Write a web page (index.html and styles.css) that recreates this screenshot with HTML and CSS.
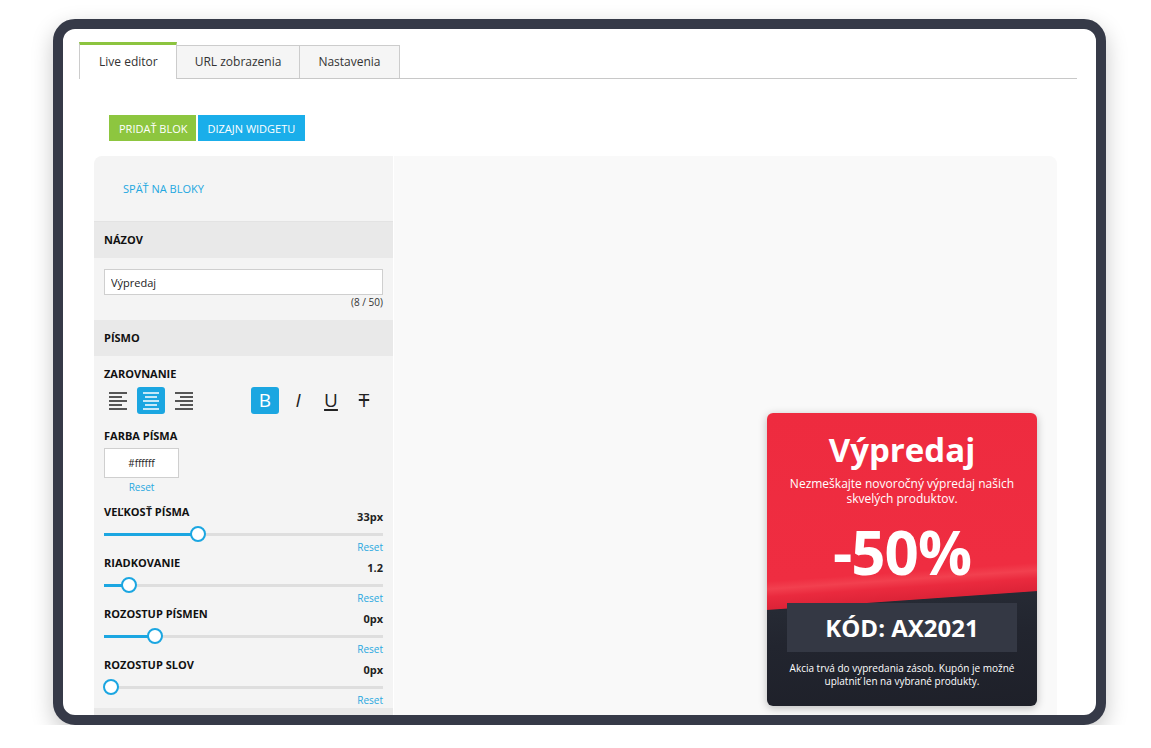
FILE: index.html
```html
<!DOCTYPE html>
<html lang="sk">
<head>
  <meta charset="UTF-8">
  <meta name="viewport" content="width=device-width, initial-scale=1.0">
  <title>Live editor</title>
  <link rel="stylesheet" href="styles.css">
</head>
<body>
  <div class="device">
    <div class="screen">
      <div class="tabs">
        <div class="tab active">Live editor</div>
        <div class="tab">URL zobrazenia</div>
        <div class="tab">Nastavenia</div>
      </div>

      <div class="toolbar">
        <button class="btn btn-green">PRIDAŤ BLOK</button>
        <button class="btn btn-blue">DIZAJN WIDGETU</button>
      </div>

      <div class="editor">
        <div class="sidebar">
          <div class="back"><a href="#">SPÄŤ NA BLOKY</a></div>

          <div class="section-head">NÁZOV</div>
          <div class="section section-name">
            <input class="text-input" type="text" value="Výpredaj">
            <div class="counter">(8 / 50)</div>
          </div>

          <div class="section-head">PÍSMO</div>
          <div class="section section-font">
            <div class="label">ZAROVNANIE</div>
            <div class="format-row">
              <div class="icon-group">
                <div class="icon-btn">
                  <svg width="18" height="18" viewBox="0 0 18 18"><g stroke="#222" stroke-width="1.6"><path d="M0 1h18M0 5h13M0 9h18M0 13h13M0 17h18"/></g></svg>
                </div>
                <div class="icon-btn selected">
                  <svg width="18" height="18" viewBox="0 0 18 18"><g stroke="#fff" stroke-width="1.6"><path d="M1 1h16M3 5h12M1 9h16M3 13h12M1 17h16"/></g></svg>
                </div>
                <div class="icon-btn">
                  <svg width="18" height="18" viewBox="0 0 18 18"><g stroke="#222" stroke-width="1.6"><path d="M0 1h18M5 5h13M0 9h18M5 13h13M0 17h18"/></g></svg>
                </div>
              </div>
              <div class="icon-group styles">
                <div class="icon-btn selected glyph bold">B</div>
                <div class="icon-btn glyph italic">I</div>
                <div class="icon-btn glyph underline">U</div>
                <div class="icon-btn glyph strike">T</div>
              </div>
            </div>

            <div class="label label-color">FARBA PÍSMA</div>
            <div class="color-field">
              <div class="color-box">#ffffff</div>
              <a class="reset" href="#">Reset</a>
            </div>

            <div class="slider-field first">
              <div class="slider-head"><span class="label">VEĽKOSŤ PÍSMA</span><span class="value">33px</span></div>
              <div class="slider"><div class="fill" style="width: 94px"></div><div class="thumb" style="left: 94px"></div></div>
              <div class="reset-row"><a class="reset" href="#">Reset</a></div>
            </div>
            <div class="slider-field">
              <div class="slider-head"><span class="label">RIADKOVANIE</span><span class="value">1.2</span></div>
              <div class="slider"><div class="fill" style="width: 25px"></div><div class="thumb" style="left: 25px"></div></div>
              <div class="reset-row"><a class="reset" href="#">Reset</a></div>
            </div>
            <div class="slider-field">
              <div class="slider-head"><span class="label">ROZOSTUP PÍSMEN</span><span class="value">0px</span></div>
              <div class="slider"><div class="fill" style="width: 51px"></div><div class="thumb" style="left: 51px"></div></div>
              <div class="reset-row"><a class="reset" href="#">Reset</a></div>
            </div>
            <div class="slider-field">
              <div class="slider-head"><span class="label">ROZOSTUP SLOV</span><span class="value">0px</span></div>
              <div class="slider"><div class="fill" style="width: 7px"></div><div class="thumb" style="left: 7px"></div></div>
              <div class="reset-row"><a class="reset" href="#">Reset</a></div>
            </div>
          </div>

          <div class="section-head"></div>
        </div>

        <div class="preview">
          <div class="widget">
            <div class="widget-title">Výpredaj</div>
            <div class="widget-text">Nezmeškajte novoročný výpredaj našich skvelých produktov.</div>
            <div class="widget-discount">-50%</div>
            <div class="widget-code">KÓD: AX2021</div>
            <div class="widget-note">Akcia trvá do vypredania zásob. Kupón je možné uplatniť len na vybrané produkty.</div>
          </div>
        </div>
      </div>
    </div>
  </div>
</body>
</html>
```

FILE: styles.css
```css
html, body {
  margin: 0;
  padding: 0;
  background-color: #ffffff;
  overflow: hidden;
}
body {
  font-family: 'Open Sans', 'Liberation Sans', sans-serif;
  color: #222;
}
a {
  text-decoration: none;
}

/* device frame */
.device {
  box-sizing: border-box;
  width: 1053px;
  height: 706px;
  margin: 19px 0 0 53px;
  border: 10px solid #363a48;
  border-radius: 22px;
  background-color: #ffffff;
  box-shadow: 0 8px 22px rgba(0, 0, 0, 0.22);
  overflow: hidden;
}
.screen {
  padding: 13px 19px 0 16px;
}

/* tabs */
.tabs {
  display: flex;
  align-items: flex-end;
  height: 36px;
  border-bottom: 1px solid #c8c8c8;
}
.tab {
  box-sizing: border-box;
  height: 33px;
  padding: 0 18px;
  border: 1px solid #cccccc;
  border-bottom: none;
  margin-left: -1px;
  background-color: #f5f5f5;
  font-size: 12px;
  line-height: 32px;
  color: #333;
}
.tab.active {
  height: 37px;
  margin: 0 0 -1px 0;
  border-top: 3px solid #8cc43f;
  background-color: #ffffff;
  padding: 0 18px 0 19px;
  line-height: 33px;
}

/* toolbar */
.toolbar {
  display: flex;
  gap: 2px;
  margin: 36px 0 0 30px;
}
.btn {
  height: 26px;
  padding: 0 9px;
  border: none;
  font-family: inherit;
  font-size: 11px;
  color: #ffffff;
  cursor: pointer;
}
.btn-green {
  background-color: #8dc63f;
  padding: 0 9px 0 10px;
}
.btn-blue {
  background-color: #1aaeea;
  padding: 0 10px 0 9px;
}

/* editor */
.editor {
  display: flex;
  width: 963px;
  height: 570px;
  margin: 15px 0 0 15px;
  border-radius: 8px 8px 0 0;
  overflow: hidden;
}
.sidebar {
  width: 299px;
  flex-shrink: 0;
  background-color: #f4f4f4;
  border-right: 1px solid #ffffff;
  overflow: hidden;
}
.back {
  height: 65px;
  padding-left: 29px;
  border-bottom: 1px solid #e3e3e3;
  line-height: 66px;
  font-size: 11px;
}
.back a {
  color: #22a7e0;
}
.section-head {
  height: 36px;
  padding-left: 10px;
  background-color: #e9e9e9;
  font-size: 11px;
  font-weight: 700;
  line-height: 36px;
  color: #111;
}
.section {
  padding: 0 10px;
}
.section-name {
  padding-top: 11px;
  padding-bottom: 12px;
}
.text-input {
  box-sizing: border-box;
  display: block;
  width: 279px;
  height: 26px;
  padding: 0 6px;
  border: 1px solid #cfcfcf;
  background-color: #ffffff;
  font-family: inherit;
  font-size: 11px;
  color: #222;
  outline: none;
}
.counter {
  margin-top: 1px;
  text-align: right;
  font-size: 10px;
  line-height: 12px;
  color: #333;
}
.section-font {
  padding-top: 11px;
  padding-bottom: 2px;
}
.label {
  font-size: 11px;
  font-weight: 700;
  line-height: 14px;
  color: #111;
}
.format-row {
  display: flex;
  margin-top: 6px;
}
.icon-group {
  display: flex;
  gap: 5px;
}
.icon-group.styles {
  margin-left: 53px;
}
.icon-btn {
  width: 28px;
  height: 27px;
  border-radius: 3px;
  display: flex;
  align-items: center;
  justify-content: center;
}
.icon-btn.selected {
  background-color: #1ba6e1;
}
.glyph {
  font-size: 19px;
  color: #222;
  line-height: 27px;
}
.glyph.bold {
  color: #ffffff;
}
.glyph.italic {
  font-style: italic;
}
.glyph.underline {
  text-decoration: underline;
  text-decoration-thickness: 1.5px;
  text-underline-offset: 2px;
}
.glyph.strike {
  text-decoration: line-through;
  text-decoration-thickness: 1.5px;
}
.label-color {
  margin-top: 15px;
}
.color-field {
  width: 75px;
  text-align: center;
  font-size: 10px;
  line-height: 12px;
}
.color-box {
  box-sizing: border-box;
  height: 30px;
  margin: 5px 0 3px;
  border: 1px solid #cfcfcf;
  background-color: #ffffff;
  font-size: 10px;
  line-height: 28px;
  color: #222;
}
.reset {
  display: inline-block;
  vertical-align: top;
  font-size: 10px;
  line-height: 12px;
  color: #29a8e0;
}

/* sliders */
.slider-field {
  margin-top: 3px;
}
.slider-field.first {
  margin-top: 12px;
}
.slider-head {
  display: flex;
  justify-content: space-between;
}
.slider-head .value {
  padding-top: 5px;
  font-size: 11px;
  font-weight: 700;
  line-height: 14px;
}
.slider {
  position: relative;
  height: 16px;
  margin-top: 2px;
  background: linear-gradient(#dedede, #dedede) 0 50% / 100% 3px no-repeat;
}
.slider .fill {
  position: absolute;
  left: 0;
  top: 6.5px;
  height: 3px;
  background-color: #1ba6e1;
}
.slider .thumb {
  position: absolute;
  top: 0;
  box-sizing: border-box;
  width: 16px;
  height: 16px;
  margin-left: -8px;
  border: 2.5px solid #1ba6e1;
  border-radius: 50%;
  background-color: #ffffff;
}
.reset-row {
  margin-top: -1px;
  text-align: right;
  font-size: 10px;
  line-height: 12px;
}

/* preview */
.preview {
  flex: 1;
  display: flex;
  justify-content: flex-end;
  align-items: flex-end;
  padding: 0 20px 20px 0;
  background-color: #f9f9f9;
}
.widget {
  box-sizing: border-box;
  width: 270px;
  height: 293px;
  padding: 17px 20px 0;
  border-radius: 6px;
  color: #ffffff;
  text-align: center;
  box-shadow: 0 2px 8px rgba(0, 0, 0, 0.25);
  background: linear-gradient(176deg,
    #ee2b3f 0%, #ef2d41 54%, #f2404f 56.5%, #ea2a3e 59%, #dc2337 63%,
    #262a34 63.3%, #22252f 75%, #1e2029 100%);
}
.widget-title {
  font-size: 33px;
  font-weight: 700;
  line-height: 1.2;
}
.widget-text {
  margin-top: 6px;
  font-size: 12px;
  line-height: 15px;
}
.widget-discount {
  margin-top: 10px;
  font-size: 60px;
  font-weight: 700;
  line-height: 72px;
  letter-spacing: -1px;
}
.widget-code {
  height: 49px;
  margin-top: 15px;
  background-color: #343844;
  font-size: 24px;
  font-weight: 700;
  line-height: 49px;
}
.widget-note {
  margin-top: 10px;
  font-size: 10px;
  line-height: 13px;
}
```
